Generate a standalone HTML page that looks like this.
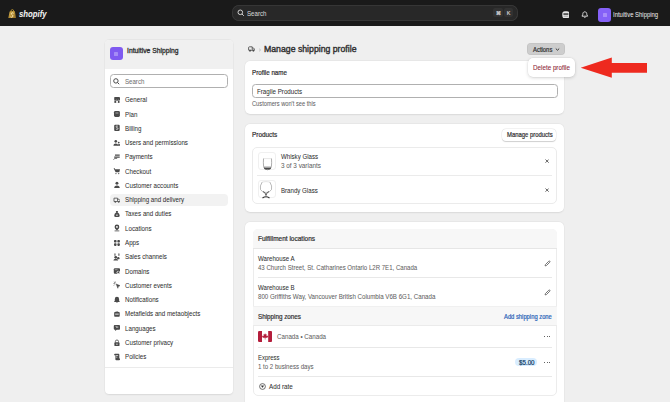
<!DOCTYPE html>
<html><head><meta charset="utf-8"><style>
html,body{margin:0;padding:0;}
body{width:670px;height:402px;overflow:hidden;position:relative;background:#efefef;font-family:"Liberation Sans",sans-serif;}
.t{position:absolute;white-space:nowrap;transform-origin:0 50%;-webkit-text-stroke:0.04px currentColor;}
.r{position:absolute;}
</style></head><body>
<div class="r" style="left:0px;top:0px;width:670px;height:25.8px;background:#1a1a1a;"></div>
<svg class="r" style="left:8.2px;top:8.6px" width="8.2" height="9.8" viewBox="0 0 8.2 9.8"><defs><linearGradient id="gb" x1="0" y1="0" x2="1" y2="1"><stop offset="0" stop-color="#d9b24e"/><stop offset="1" stop-color="#8f6a1f"/></linearGradient></defs><path d="M1.6 2.8 Q1.7 2.2 2.3 2.2 L6.2 2 Q6.8 2 6.9 2.6 L8 9 Q8 9.6 7.4 9.6 L0.8 9.7 Q0.2 9.7 0.3 9.1 Z" fill="url(#gb)"/><path d="M2.8 2.6 Q3 0.5 4.4 0.5 Q5.6 0.5 5.8 2.4" stroke="#b8922f" stroke-width="0.9" fill="none"/><path d="M5.6 4.3 Q4.9 3.6 4 3.9 Q3 4.3 3.6 5.3 Q4.6 6.1 4.9 6.8 Q5 8 3.8 8.2 Q3 8.3 2.6 7.8" stroke="#f6e7b8" stroke-width="1" fill="none"/></svg>
<div class="t" id="t1" style="left:18.6px;top:9.75px;font-size:8.8px;line-height:8.8px;font-weight:700;color:#f2f2f2;transform:scaleX(0.8845);font-style:italic;">shopify</div>
<div class="r" style="left:232px;top:4.5px;width:286px;height:16.5px;background:#282828;border-radius:7px;box-shadow:inset 0 0 0 0.8px #3b3b3b;"></div>
<svg class="r" style="left:237px;top:9px" width="8" height="8" viewBox="0 0 8 8"><circle cx="3.3" cy="3.3" r="2.3" stroke="#d0d0d0" stroke-width="1" fill="none"/><path d="M5 5 L6.8 6.8" stroke="#d0d0d0" stroke-width="1"/></svg>
<div class="t" id="t2" style="left:246.5px;top:10.51px;font-size:6.6px;line-height:6.6px;color:#d6d6d6;transform:scaleX(0.9312);">Search</div>
<div class="r" style="left:493.3px;top:8.2px;width:9.6px;height:8.6px;background:#323232;border-radius:2px;"></div>
<div class="r" style="left:504.3px;top:8.2px;width:9.2px;height:8.6px;background:#323232;border-radius:2px;"></div>
<div class="t" id="t3" style="left:495.6px;top:10.83px;font-size:5.4px;line-height:5.4px;font-weight:700;color:#c4c4c4;">⌘</div>
<div class="t" id="t4" style="left:506.8px;top:11.00px;font-size:5.2px;line-height:5.2px;font-weight:700;color:#c4c4c4;">K</div>
<svg class="r" style="left:561.6px;top:10.9px" width="7.8" height="7.6" viewBox="0 0 7.8 7.6"><rect x="0.3" y="0.2" width="7.2" height="7.2" rx="2.6" fill="#e6e6e6"/><rect x="1.4" y="2.4" width="5" height="1.3" fill="#1a1a1a"/><rect x="1.6" y="4.8" width="4.6" height="0.6" fill="#777"/></svg>
<svg class="r" style="left:581.3px;top:11.4px" width="7.6" height="7.2" viewBox="0 0 7.6 7.2"><path d="M3.8 0.8 C2.2 0.8 1.8 2.2 1.8 3.4 L1 5.2 L6.6 5.2 L5.8 3.4 C5.8 2.2 5.4 0.8 3.8 0.8 Z" stroke="#e6e6e6" stroke-width="0.9" fill="none" stroke-linejoin="round"/><path d="M2.9 6.1 Q3.8 7 4.7 6.1" stroke="#e6e6e6" stroke-width="0.8" fill="none"/></svg>
<div class="r" style="left:598.4px;top:8.3px;width:12.9px;height:13.4px;background:#8561f7;border-radius:3px;"></div>
<div class="r" style="left:602.8px;top:13px;width:4.2px;height:4px;background:#a98df9;border-radius:0.5px;"></div>
<div class="t" id="t5" style="left:612.7px;top:12.38px;font-size:6.4px;line-height:6.4px;-webkit-text-stroke:0px currentColor;color:#f0f0f0;transform:scaleX(0.9275);">Intuitive Shipping</div>
<div class="r" style="left:105px;top:39.5px;width:128px;height:354px;background:#fff;border-radius:4px;box-shadow:0 0.8px 1.6px rgba(0,0,0,0.08), 0 0 0 0.4px rgba(0,0,0,0.04);overflow:hidden;"></div>
<div class="r" style="left:105px;top:39.5px;width:128px;height:29px;background:#f0f0f0;border-radius:4px 4px 0 0;"></div>
<div class="r" style="left:110.2px;top:47.4px;width:12.4px;height:12.4px;background:#7f5af0;border-radius:3px;"></div>
<div class="r" style="left:114.3px;top:51.5px;width:4.2px;height:4px;background:#a58cf5;border-radius:0.6px;"></div>
<div class="t" id="t6" style="left:126.6px;top:48.03px;font-size:6.7px;line-height:6.7px;-webkit-text-stroke:0.3px currentColor;color:#303030;transform:scaleX(1.0092);">Intuitive Shipping</div>
<div class="r" style="left:110.2px;top:73.5px;width:118.2px;height:14.2px;border:0.8px solid #b0b0b0;border-radius:3.5px;box-sizing:border-box;background:#fff;"></div>
<svg class="r" style="left:113.3px;top:77.8px" width="7" height="7" viewBox="0 0 7 7"><circle cx="2.9" cy="2.9" r="2.2" stroke="#4a4a4a" stroke-width="1" fill="none"/><path d="M4.5 4.5 L6.2 6.2" stroke="#4a4a4a" stroke-width="1"/></svg>
<div class="t" id="t7" style="left:124.6px;top:78.51px;font-size:6.6px;line-height:6.6px;color:#707070;transform:scaleX(0.9264);">Search</div>
<div class="r" style="left:110.3px;top:193.6px;width:117.7px;height:12.6px;background:#f2f2f2;border-radius:4px;"></div>
<div class="t" id="t8" style="left:124.9px;top:97.23px;font-size:6.7px;line-height:6.7px;color:#303030;transform:scaleX(0.9250);">General</div>
<svg class="r" style="left:112.6px;top:95.8px" width="7.9" height="7.9" viewBox="0 0 20 20"><path d="M3.5 2.5h13l2.5 5.5q0 2.6-2.7 2.6q-2.3 0-2.6-2q-.4 2-2.7 2q-2.3 0-2.7-2q-.4 2-2.7 2q-2.7 0-2.7-2.6z" fill="#4a4a4a"/><path d="M3.5 11v6.5h13v-6.5" fill="#4a4a4a"/><rect x="8" y="12.5" width="4.5" height="5" fill="#fff"/></svg>
<div class="t" id="t9" style="left:124.9px;top:111.51px;font-size:6.7px;line-height:6.7px;color:#303030;transform:scaleX(0.9250);">Plan</div>
<svg class="r" style="left:112.6px;top:110.08px" width="7.9" height="7.9" viewBox="0 0 20 20"><rect x="2.5" y="2.5" width="15" height="15" rx="3.5" fill="#4a4a4a"/><rect x="6" y="5.5" width="8" height="4" rx="1" fill="#888"/></svg>
<div class="t" id="t10" style="left:124.9px;top:125.79px;font-size:6.7px;line-height:6.7px;color:#303030;transform:scaleX(0.9250);">Billing</div>
<svg class="r" style="left:112.6px;top:124.36px" width="7.9" height="7.9" viewBox="0 0 20 20"><rect x="3" y="2" width="14" height="16" rx="2.5" fill="#4a4a4a"/><path d="M12.5 6.5q-1-1.2-2.6-1.2q-2.3 0-2.3 1.8q0 1.5 2.5 2q2.6.5 2.6 2.2q0 2-2.5 2q-1.7 0-2.8-1.3M10 4v1.4M10 13.3v1.6" stroke="#fff" stroke-width="1.6" fill="none"/></svg>
<div class="t" id="t11" style="left:124.9px;top:140.07px;font-size:6.7px;line-height:6.7px;color:#303030;transform:scaleX(0.9250);">Users and permissions</div>
<svg class="r" style="left:112.6px;top:138.64px" width="7.9" height="7.9" viewBox="0 0 20 20"><circle cx="7" cy="6" r="3.3" fill="#4a4a4a"/><path d="M1 17q0-5.5 6-5.5q6 0 6 5.5z" fill="#4a4a4a"/><circle cx="14.5" cy="9" r="2.3" fill="#4a4a4a"/><path d="M11.5 17q.5-4.5 3.5-4.5q4 0 4 4.5z" fill="#4a4a4a"/></svg>
<div class="t" id="t12" style="left:124.9px;top:154.35px;font-size:6.7px;line-height:6.7px;color:#303030;transform:scaleX(0.9250);">Payments</div>
<svg class="r" style="left:112.6px;top:152.92px" width="7.9" height="7.9" viewBox="0 0 20 20"><path d="M5 4h12v3h-12zM3 9h14v3h-14z" fill="#4a4a4a"/><path d="M1.5 17l3-3.5h6" stroke="#4a4a4a" stroke-width="2.2" fill="none"/></svg>
<div class="t" id="t13" style="left:124.9px;top:168.63px;font-size:6.7px;line-height:6.7px;color:#303030;transform:scaleX(0.9250);">Checkout</div>
<svg class="r" style="left:112.6px;top:167.2px" width="7.9" height="7.9" viewBox="0 0 20 20"><path d="M1.5 3h3l.8 2.5h12.5l-1.8 7.5h-9.3z" fill="#4a4a4a"/><circle cx="7.5" cy="16.5" r="1.6" fill="#4a4a4a"/><circle cx="14.5" cy="16.5" r="1.6" fill="#4a4a4a"/></svg>
<div class="t" id="t14" style="left:124.9px;top:182.91px;font-size:6.7px;line-height:6.7px;color:#303030;transform:scaleX(0.9250);">Customer accounts</div>
<svg class="r" style="left:112.6px;top:181.47999999999996px" width="7.9" height="7.9" viewBox="0 0 20 20"><circle cx="10" cy="6" r="3.8" fill="#4a4a4a"/><path d="M3 18q0-6.5 7-6.5q7 0 7 6.5z" fill="#4a4a4a"/></svg>
<div class="t" id="t15" style="left:124.9px;top:197.19px;font-size:6.7px;line-height:6.7px;color:#303030;transform:scaleX(0.9250);">Shipping and delivery</div>
<svg class="r" style="left:112.6px;top:195.76px" width="7.9" height="7.9" viewBox="0 0 20 20"><path d="M2.5 5.5h9v8.5h-9zM11.5 8h3.5l2.5 3v3h-6" stroke="#4a4a4a" stroke-width="2" fill="none"/><circle cx="6" cy="15" r="2" fill="#4a4a4a"/><circle cx="14.5" cy="15" r="2" fill="#4a4a4a"/></svg>
<div class="t" id="t16" style="left:124.9px;top:211.47px;font-size:6.7px;line-height:6.7px;color:#303030;transform:scaleX(0.9250);">Taxes and duties</div>
<svg class="r" style="left:112.6px;top:210.03999999999996px" width="7.9" height="7.9" viewBox="0 0 20 20"><path d="M7 2.5h6l-1.5 3.5q5.5 3 5.5 8.5q0 3.5-4 3.5h-6q-4 0-4-3.5q0-5.5 5.5-8.5z" fill="#4a4a4a"/><circle cx="10" cy="13" r="2.2" fill="#bbb"/></svg>
<div class="t" id="t17" style="left:124.9px;top:225.75px;font-size:6.7px;line-height:6.7px;color:#303030;transform:scaleX(0.9250);">Locations</div>
<svg class="r" style="left:112.6px;top:224.31999999999996px" width="7.9" height="7.9" viewBox="0 0 20 20"><path d="M10 1.5q6 0 6 6q0 4-6 9q-6-5-6-9q0-6 6-6z" fill="#4a4a4a"/><circle cx="10" cy="7.5" r="2.3" fill="#fff"/><rect x="4" y="16.5" width="12" height="2" fill="#4a4a4a"/></svg>
<div class="t" id="t18" style="left:124.9px;top:240.03px;font-size:6.7px;line-height:6.7px;color:#303030;transform:scaleX(0.9250);">Apps</div>
<svg class="r" style="left:112.6px;top:238.59999999999997px" width="7.9" height="7.9" viewBox="0 0 20 20"><rect x="2.5" y="2.5" width="6.5" height="6.5" rx="2" fill="#4a4a4a"/><rect x="11" y="2.5" width="6.5" height="6.5" rx="2" fill="#4a4a4a"/><rect x="2.5" y="11" width="6.5" height="6.5" rx="2" fill="#4a4a4a"/><rect x="11" y="11" width="6.5" height="6.5" rx="2" fill="#4a4a4a"/></svg>
<div class="t" id="t19" style="left:124.9px;top:254.31px;font-size:6.7px;line-height:6.7px;color:#303030;transform:scaleX(0.9250);">Sales channels</div>
<svg class="r" style="left:112.6px;top:252.87999999999994px" width="7.9" height="7.9" viewBox="0 0 20 20"><circle cx="7" cy="11" r="3.6" fill="#4a4a4a"/><path d="M1 19q0-4.5 6-4.5q6 0 6 4.5z" fill="#4a4a4a"/><circle cx="13.5" cy="13" r="3" fill="#4a4a4a"/><path d="M5 2v4M15 2v4" stroke="#4a4a4a" stroke-width="2.6" stroke-linecap="round"/></svg>
<div class="t" id="t20" style="left:124.9px;top:268.59px;font-size:6.7px;line-height:6.7px;color:#303030;transform:scaleX(0.9250);">Domains</div>
<svg class="r" style="left:112.6px;top:267.15999999999997px" width="7.9" height="7.9" viewBox="0 0 20 20"><rect x="2" y="3" width="16" height="14" rx="3" fill="#4a4a4a"/><circle cx="13.5" cy="13.5" r="4.2" fill="#fff"/><circle cx="13.5" cy="13.5" r="2.6" fill="#4a4a4a"/><rect x="4.5" y="6" width="7" height="2" fill="#aaa"/></svg>
<div class="t" id="t21" style="left:124.9px;top:282.87px;font-size:6.7px;line-height:6.7px;color:#303030;transform:scaleX(0.9250);">Customer events</div>
<svg class="r" style="left:112.6px;top:281.44px" width="7.9" height="7.9" viewBox="0 0 20 20"><path d="M8 7.5l10.5 4.5-4.5 1.6-1.8 4.9z" fill="#4a4a4a" stroke="#4a4a4a" stroke-width="1.2" stroke-linejoin="round"/><path d="M5.5 1v4.5M1 6.5h4.5M2.2 2.2l2.2 2.2M2 11.5l2.5-2.5" stroke="#4a4a4a" stroke-width="1.5"/></svg>
<div class="t" id="t22" style="left:124.9px;top:297.15px;font-size:6.7px;line-height:6.7px;color:#303030;transform:scaleX(0.9250);">Notifications</div>
<svg class="r" style="left:112.6px;top:295.71999999999997px" width="7.9" height="7.9" viewBox="0 0 20 20"><path d="M10 2q5.5 0 5.5 6v4l2 3h-15l2-3v-4q0-6 5.5-6z" fill="#4a4a4a"/><path d="M7.5 16.5q2.5 3 5 0" fill="#4a4a4a"/></svg>
<div class="t" id="t23" style="left:124.9px;top:311.43px;font-size:6.7px;line-height:6.7px;color:#303030;transform:scaleX(0.9250);">Metafields and metaobjects</div>
<svg class="r" style="left:112.6px;top:309.99999999999994px" width="7.9" height="7.9" viewBox="0 0 20 20"><path d="M3 7q0-2 2-2h2v-2h2v2h2v-2h2v2h2q2 0 2 2v8q0 2-2 2h-10q-2 0-2-2z" fill="#4a4a4a"/><rect x="5.5" y="9" width="9" height="3" fill="#ccc"/></svg>
<div class="t" id="t24" style="left:124.9px;top:325.71px;font-size:6.7px;line-height:6.7px;color:#303030;transform:scaleX(0.9250);">Languages</div>
<svg class="r" style="left:112.6px;top:324.28px" width="7.9" height="7.9" viewBox="0 0 20 20"><path d="M2 5q0-2.5 2.5-2.5h11q2.5 0 2.5 2.5v7q0 2.5-2.5 2.5h-6l-4 3.5v-3.5h-1q-2.5 0-2.5-2.5z" fill="#4a4a4a"/><path d="M6 6h3v4M12 6v4" stroke="#fff" stroke-width="1.5"/></svg>
<div class="t" id="t25" style="left:124.9px;top:339.99px;font-size:6.7px;line-height:6.7px;color:#303030;transform:scaleX(0.9250);">Customer privacy</div>
<svg class="r" style="left:112.6px;top:338.56px" width="7.9" height="7.9" viewBox="0 0 20 20"><path d="M6 9v-2.5q0-4 4-4q4 0 4 4v2.5" stroke="#4a4a4a" stroke-width="2" fill="none"/><rect x="3.5" y="8.5" width="13" height="9.5" rx="2" fill="#4a4a4a"/><circle cx="10" cy="13" r="1.6" fill="#fff"/></svg>
<div class="t" id="t26" style="left:124.9px;top:354.27px;font-size:6.7px;line-height:6.7px;color:#303030;transform:scaleX(0.9250);">Policies</div>
<svg class="r" style="left:112.6px;top:352.84px" width="7.9" height="7.9" viewBox="0 0 20 20"><path d="M3 4q0-2 2-2h9q2 0 2 2v10h2v2q0 2.5-2.5 2.5h-7q-2.5 0-2.5-2.5v-10h-3z" fill="#4a4a4a"/><rect x="7" y="6" width="6" height="1.6" fill="#fff"/><rect x="7" y="9.5" width="4" height="1.6" fill="#fff"/></svg>
<div class="r" style="left:105px;top:366.5px;width:128px;height:0.6px;background:#ebebeb;"></div>
<svg class="r" style="left:248px;top:46.2px" width="7.2" height="6" viewBox="0 0 7.2 6"><path d="M0.6 4.4 V1.6 Q0.6 0.8 1.4 0.8 H4.2 V4.4 M4.2 1.9 H5.4 L6.6 3.2 V4.4" stroke="#4a4a4a" stroke-width="0.85" fill="none" stroke-linejoin="round"/><circle cx="2" cy="4.6" r="1.05" fill="#4a4a4a"/><circle cx="5.4" cy="4.6" r="1.05" fill="#4a4a4a"/><path d="M2.9 4.4 H4.5" stroke="#4a4a4a" stroke-width="0.7"/></svg>
<svg class="r" style="left:258.6px;top:47.6px" width="2" height="4" viewBox="0 0 2 4"><path d="M0.5 0.6 L1.3 2 L0.5 3.4" stroke="#9a9a9a" stroke-width="0.55" fill="none"/></svg>
<div class="t" id="t27" style="left:263.6px;top:45.18px;font-size:9.0px;line-height:9.0px;-webkit-text-stroke:0.4px currentColor;color:#303030;transform:scaleX(0.9680);">Manage shipping profile</div>
<div class="r" style="left:527.2px;top:43.2px;width:37.5px;height:11.6px;background:#cdcdcd;border-radius:4px;box-shadow:inset 0 0 0 0.6px rgba(0,0,0,0.07);"></div>
<div class="t" id="t28" style="left:532.5px;top:46.88px;font-size:6.4px;line-height:6.4px;-webkit-text-stroke:0.2px currentColor;color:#303030;transform:scaleX(0.9230);">Actions</div>
<svg class="r" style="left:555.2px;top:47.3px" width="5" height="5" viewBox="0 0 5 5"><path d="M0.8 1.6 L2.5 3.2 L4.2 1.6" stroke="#303030" stroke-width="0.95" fill="none"/></svg>
<div class="r" style="left:245px;top:61px;width:319px;height:53px;background:#fff;border-radius:5px;box-shadow:0 0.8px 1.6px rgba(0,0,0,0.08), 0 0 0 0.4px rgba(0,0,0,0.03);"></div>
<div class="t" id="t29" style="left:252.2px;top:70.20px;font-size:6.5px;line-height:6.5px;-webkit-text-stroke:0.2px currentColor;color:#303030;transform:scaleX(0.9582);">Profile name</div>
<div class="r" style="left:252px;top:84px;width:305.5px;height:13.6px;border:0.8px solid #b0b0b0;border-radius:3.5px;box-sizing:border-box;background:#fff;"></div>
<div class="t" id="t30" style="left:257.2px;top:88.71px;font-size:6.6px;line-height:6.6px;color:#303030;transform:scaleX(0.9408);">Fragile Products</div>
<div class="t" id="t31" style="left:252.2px;top:100.97px;font-size:6.3px;line-height:6.3px;color:#616161;transform:scaleX(0.9057);">Customers won't see this</div>
<div class="r" style="left:245px;top:124px;width:319px;height:88px;background:#fff;border-radius:5px;box-shadow:0 0.8px 1.6px rgba(0,0,0,0.08), 0 0 0 0.4px rgba(0,0,0,0.03);"></div>
<div class="t" id="t32" style="left:252px;top:132.30px;font-size:6.5px;line-height:6.5px;-webkit-text-stroke:0.2px currentColor;color:#303030;transform:scaleX(0.9815);">Products</div>
<div class="r" style="left:502px;top:129.3px;width:54.4px;height:11.3px;background:#fff;border-radius:4px;box-shadow:0 0 0 0.5px rgba(0,0,0,0.07), 0 0.9px 1px rgba(0,0,0,0.16);"></div>
<div class="t" id="t33" style="left:506.7px;top:132.20px;font-size:6.5px;line-height:6.5px;-webkit-text-stroke:0.2px currentColor;color:#303030;transform:scaleX(0.9088);">Manage products</div>
<div class="r" style="left:252px;top:146.5px;width:305.2px;height:57.8px;border:0.6px solid #ebebeb;border-radius:5px;box-sizing:border-box;"></div>
<div class="r" style="left:257.6px;top:151.8px;width:18px;height:18.2px;border:0.5px solid #f0f0f0;border-radius:3px;box-sizing:border-box;"></div>
<div class="r" style="left:257.6px;top:179.8px;width:18px;height:18.2px;border:0.5px solid #f0f0f0;border-radius:3px;box-sizing:border-box;"></div>
<svg class="r" style="left:261.5px;top:156.5px" width="11" height="14" viewBox="0 0 11 14"><path d="M1.5 1.5 Q1.2 6 1.6 9.5 Q2 12.8 5.5 12.8 Q9 12.8 9.4 9.5 Q9.8 6 9.5 1.5" stroke="#8a8a8a" stroke-width="0.7" fill="none"/><path d="M1.4 1.6 L9.6 1.6" stroke="#cfcfcf" stroke-width="0.5"/><path d="M1.8 10.4 L9.2 10.4 Q9 12.6 5.5 12.6 Q2 12.6 1.8 10.4 Z" fill="#4a4a4a"/><path d="M1.8 9.6 L9.2 9.6" stroke="#9a9a9a" stroke-width="0.5"/></svg>
<svg class="r" style="left:258.5px;top:180.5px" width="14" height="18" viewBox="0 0 14 18"><path d="M3.2 1 Q0.5 5 1.5 8.5 Q3 11.5 7 11.5 Q11 11.5 12.5 8.5 Q13.5 5 10.8 1" stroke="#8a8a8a" stroke-width="0.6" fill="none"/><path d="M3.2 1 Q7 0.2 10.8 1" stroke="#c8c8c8" stroke-width="0.5" fill="none"/><path d="M4 10.5 Q7 12.5 7 13.8 Q7 12.5 10 10.5" stroke="#444" stroke-width="0.9" fill="none"/><path d="M7 13 L7 15" stroke="#444" stroke-width="0.8"/><path d="M3.5 17 Q7 14.5 10.5 17" stroke="#333" stroke-width="1.1" fill="none"/></svg>
<div class="t" id="t34" style="left:281px;top:154.41px;font-size:6.6px;line-height:6.6px;color:#303030;transform:scaleX(0.9281);">Whisky Glass</div>
<div class="t" id="t35" style="left:281px;top:163.21px;font-size:6.6px;line-height:6.6px;color:#616161;transform:scaleX(0.9628);">3 of 3 variants</div>
<div class="t" id="t36" style="left:281px;top:188.01px;font-size:6.6px;line-height:6.6px;color:#303030;transform:scaleX(0.9286);">Brandy Glass</div>
<div class="r" style="left:257px;top:175.1px;width:295px;height:0.6px;background:#ebebeb;"></div>
<svg class="r" style="left:545px;top:159.2px" width="4.2" height="4.2" viewBox="0 0 4.2 4.2"><path d="M0.5 0.5 L3.7 3.7 M3.7 0.5 L0.5 3.7" stroke="#4a4a4a" stroke-width="0.85"/></svg>
<svg class="r" style="left:545px;top:188px" width="4.2" height="4.2" viewBox="0 0 4.2 4.2"><path d="M0.5 0.5 L3.7 3.7 M3.7 0.5 L0.5 3.7" stroke="#4a4a4a" stroke-width="0.85"/></svg>
<div class="r" style="left:245px;top:221.5px;width:319px;height:200px;background:#fff;border-radius:5px;box-shadow:0 0.8px 1.6px rgba(0,0,0,0.08), 0 0 0 0.4px rgba(0,0,0,0.03);"></div>
<div class="r" style="left:252.7px;top:228.5px;width:304.5px;height:167.8px;border:0.6px solid #ececec;border-radius:5px;box-sizing:border-box;overflow:hidden;"></div>
<div class="r" style="left:253.2px;top:229px;width:303.5px;height:19.5px;background:#f7f7f7;border-radius:5px 5px 0 0;"></div>
<div class="r" style="left:253.2px;top:248.4px;width:303.5px;height:0.6px;background:#e6e6e6;"></div>
<div class="t" id="t37" style="left:257.9px;top:235.90px;font-size:6.5px;line-height:6.5px;-webkit-text-stroke:0.2px currentColor;color:#303030;transform:scaleX(1.0002);">Fulfillment locations</div>
<div class="t" id="t38" style="left:257.8px;top:256.21px;font-size:6.6px;line-height:6.6px;color:#303030;transform:scaleX(0.9320);">Warehouse A</div>
<div class="t" id="t39" style="left:257.8px;top:264.91px;font-size:6.6px;line-height:6.6px;color:#616161;transform:scaleX(0.9200);">43 Church Street, St. Catharines Ontario L2R 7E1, Canada</div>
<div class="r" style="left:257.5px;top:277.4px;width:294px;height:0.6px;background:#e8e8e8;"></div>
<div class="t" id="t40" style="left:257.8px;top:285.21px;font-size:6.6px;line-height:6.6px;color:#303030;transform:scaleX(0.9231);">Warehouse B</div>
<div class="t" id="t41" style="left:257.8px;top:294.01px;font-size:6.6px;line-height:6.6px;color:#616161;transform:scaleX(0.9355);">800 Griffiths Way, Vancouver British Columbia V6B 6G1, Canada</div>
<svg class="r" style="left:543.8px;top:259.8px" width="7" height="7" viewBox="0 0 7 7"><path d="M1.1 5.9 L1.4 4.6 L4.8 1.2 Q5.3 0.7 5.8 1.2 L5.8 1.2 Q6.3 1.7 5.8 2.2 L2.4 5.6 Z" stroke="#5c5c5c" stroke-width="0.85" fill="none" stroke-linejoin="round"/></svg>
<svg class="r" style="left:543.8px;top:289px" width="7" height="7" viewBox="0 0 7 7"><path d="M1.1 5.9 L1.4 4.6 L4.8 1.2 Q5.3 0.7 5.8 1.2 L5.8 1.2 Q6.3 1.7 5.8 2.2 L2.4 5.6 Z" stroke="#5c5c5c" stroke-width="0.85" fill="none" stroke-linejoin="round"/></svg>
<div class="r" style="left:253.2px;top:306.3px;width:303.5px;height:19px;background:#f7f7f7;"></div>
<div class="r" style="left:253.2px;top:306.0px;width:303.5px;height:0.5px;background:#f0f0f0;"></div>
<div class="r" style="left:253.2px;top:325.1px;width:303.5px;height:0.5px;background:#ebebeb;"></div>
<div class="t" id="t42" style="left:257.8px;top:313.90px;font-size:6.5px;line-height:6.5px;-webkit-text-stroke:0.2px currentColor;color:#303030;transform:scaleX(0.9645);">Shipping zones</div>
<div class="t" id="t43" style="left:504px;top:314.17px;font-size:6.3px;line-height:6.3px;-webkit-text-stroke:0.2px currentColor;color:#2a64b8;transform:scaleX(0.9232);">Add shipping zone</div>
<svg class="r" style="left:257.8px;top:331px" width="14.2" height="11" viewBox="0 0 14.2 11"><rect x="0" y="0" width="14.2" height="11" rx="1.2" fill="#fff"/><path d="M1.2 0 H4 V11 H1.2 Q0 11 0 9.8 V1.2 Q0 0 1.2 0 Z" fill="#b41e3c"/><path d="M10.2 0 H13 Q14.2 0 14.2 1.2 V9.8 Q14.2 11 13 11 H10.2 Z" fill="#b41e3c"/><path d="M7.1 2.3 L7.8 3.6 L8.7 3.2 L8.4 5.3 L9.5 4.5 L9.8 5.2 L10.3 5.3 L9.3 6.8 L7.4 6.8 L7.4 8.6 L6.8 8.6 L6.8 6.8 L4.9 6.8 L3.9 5.3 L4.4 5.2 L4.7 4.5 L5.8 5.3 L5.5 3.2 L6.4 3.6 Z" fill="#b41e3c"/></svg>
<div class="t" id="t44" style="left:277.3px;top:334.01px;font-size:6.6px;line-height:6.6px;color:#616161;transform:scaleX(0.9406);">Canada • Canada</div>
<div class="r" style="left:257.5px;top:347.0px;width:294px;height:0.6px;background:#e8e8e8;"></div>
<div class="t" id="t45" style="left:257.8px;top:355.21px;font-size:6.6px;line-height:6.6px;color:#303030;transform:scaleX(0.9047);">Express</div>
<div class="t" id="t46" style="left:257.8px;top:364.21px;font-size:6.6px;line-height:6.6px;color:#616161;transform:scaleX(0.9242);">1 to 2 business days</div>
<div class="r" style="left:515.3px;top:358.0px;width:21.6px;height:8.0px;background:#d9edff;border-radius:4px;"></div>
<div class="t" id="t47" style="left:518.6px;top:360.08px;font-size:6.4px;line-height:6.4px;-webkit-text-stroke:0.2px currentColor;color:#0f3b63;transform:scaleX(0.9734);">$5.00</div>
<div class="r" style="left:544.3px;top:336.3px;width:1.0px;height:1.0px;background:#303030;border-radius:50%;"></div>
<div class="r" style="left:546.6999999999999px;top:336.3px;width:1.0px;height:1.0px;background:#303030;border-radius:50%;"></div>
<div class="r" style="left:549.0999999999999px;top:336.3px;width:1.0px;height:1.0px;background:#303030;border-radius:50%;"></div>
<div class="r" style="left:544.3px;top:361.7px;width:1.0px;height:1.0px;background:#303030;border-radius:50%;"></div>
<div class="r" style="left:546.6999999999999px;top:361.7px;width:1.0px;height:1.0px;background:#303030;border-radius:50%;"></div>
<div class="r" style="left:549.0999999999999px;top:361.7px;width:1.0px;height:1.0px;background:#303030;border-radius:50%;"></div>
<div class="r" style="left:257.5px;top:376.2px;width:294px;height:0.6px;background:#e8e8e8;"></div>
<svg class="r" style="left:258.7px;top:383.1px" width="7" height="7" viewBox="0 0 7 7"><circle cx="3.5" cy="3.5" r="2.9" stroke="#4a4a4a" stroke-width="0.8" fill="none"/><path d="M2.3 2.7 H4.7 L3.5 4.6 Z" fill="#303030" stroke="#303030" stroke-width="0.4" stroke-linejoin="round"/></svg>
<div class="t" id="t48" style="left:268.5px;top:383.81px;font-size:6.6px;line-height:6.6px;color:#303030;transform:scaleX(0.9535);">Add rate</div>
<div class="r" style="left:527.6px;top:57.9px;width:47.2px;height:19.0px;background:#fff;border-radius:5px;box-shadow:0 1px 3.5px rgba(0,0,0,0.16), 0 0 0 0.4px rgba(0,0,0,0.05);"></div>
<div class="t" id="t49" style="left:532.6px;top:65.21px;font-size:6.6px;line-height:6.6px;-webkit-text-stroke:0.08px currentColor;color:#8e1f3a;transform:scaleX(0.9516);">Delete profile</div>
<svg class="r" style="left:578px;top:55px" width="72" height="25" viewBox="0 0 72 25"><path d="M2.7 12.7 L33.8 2.5 L33.8 7.9 L69 7.9 L69 17.7 L33.8 17.7 L33.8 22.8 Z" fill="#ee2a1f"/></svg>
</body></html>
